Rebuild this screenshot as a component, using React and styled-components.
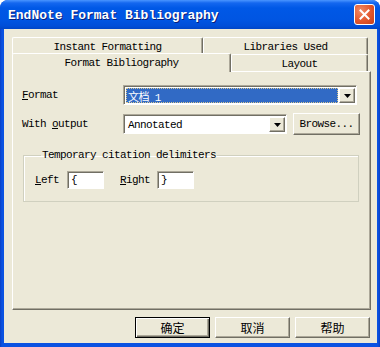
import React from "react";
import styled, { createGlobalStyle } from "styled-components";

const GlobalStyle = createGlobalStyle`
  html, body {
    margin: 0;
    padding: 0;
    background: #fff;
  }
  body {
    font-family: "Liberation Mono", "Noto Sans CJK SC", monospace;
    color: #000;
  }
`;

const Window = styled.div`
  width: 380px;
  height: 347px;
  display: flex;
  flex-direction: column;
  border-radius: 8px 8px 0 0;
  overflow: hidden;
  background: #0848d6;
`;

const TitleBar = styled.div`
  height: 29px;
  flex-shrink: 0;
  display: flex;
  align-items: center;
  justify-content: space-between;
  padding: 0 5px 0 8px;
  background: linear-gradient(
    180deg,
    #4a95ff 0px,
    #1467ef 3px,
    #0058e6 8px,
    #0055e2 20px,
    #004ed8 26px,
    #0045c6 29px
  );
`;

const Title = styled.div`
  color: #fff;
  font: bold 13px "Liberation Mono", monospace;
  text-shadow: 1px 1px #0a1f7a;
  padding-top: 1px;
`;

const CloseButton = styled.div`
  width: 21px;
  height: 21px;
  box-sizing: border-box;
  border: 1px solid #fff;
  border-radius: 3px;
  background: radial-gradient(circle at 30% 30%, #f08a66 0%, #e2572d 55%, #c4401a 100%);
  display: flex;
  align-items: center;
  justify-content: center;
`;

const Frame = styled.div`
  flex: 1;
  display: flex;
  padding: 0 4px 4px 4px;
  background: linear-gradient(90deg, #0a3fc4 0px, #0a52e2 2px, #0a52e2 calc(100% - 2px), #0a3fc4 100%);
`;

const Client = styled.div`
  flex: 1;
  display: flex;
  flex-direction: column;
  background: #ece9d8;
  padding: 8px 6px 5px 8px;
`;

const TabRow = styled.div`
  display: flex;
  height: 17px;
  margin-right: 2px;
  align-items: flex-end;
`;

const Tab = styled.div`
  width: ${(p) => p.$w}px;
  height: ${(p) => (p.$active ? "19px" : "17px")};
  margin-bottom: ${(p) => (p.$active ? "-1px" : "0")};
  position: relative;
  z-index: ${(p) => (p.$active ? 1 : 0)};
  box-sizing: border-box;
  background: #ece9d8;
  border-top: 1px solid #fff;
  border-left: 1px solid #fff;
  border-right: 1px solid #716f64;
  box-shadow: inset -1px 0 #aca899;
  border-radius: 2px 2px 0 0;
  display: flex;
  align-items: center;
  justify-content: center;
  font-size: 11px;
  letter-spacing: -0.6px;
  padding-top: ${(p) => (p.$active ? "0" : "2px")};
`;

const Panel = styled.div`
  flex: 1;
  display: flex;
  flex-direction: column;
  border: 1px solid;
  border-color: #fff #716f64 #716f64 #fff;
  box-shadow: inset -1px -1px #aca899;
  padding: 13px 10px 0 9px;
`;

const FieldRow = styled.div`
  display: flex;
  align-items: center;
  height: ${(p) => p.$h}px;
  margin-top: ${(p) => p.$mt || 0}px;
`;

const Label = styled.div`
  width: 101px;
  font-size: 11px;
  letter-spacing: -0.6px;
`;

const U = styled.span`
  text-decoration: underline;
`;

const Combo = styled.div`
  width: ${(p) => p.$w}px;
  height: 20px;
  box-sizing: border-box;
  background: #fff;
  border: 1px solid;
  border-color: #aca899 #fff #fff #aca899;
  box-shadow: inset 1px 1px #716f64;
  display: flex;
  align-items: center;
  padding: 2px 1px 1px 2px;
  gap: 1px;
`;

const ComboText = styled.div`
  flex: 1;
  height: 100%;
  box-sizing: border-box;
  display: flex;
  align-items: center;
  padding-left: 2px;
  font-size: 11px;
  letter-spacing: -0.6px;
  background: ${(p) => (p.$selected ? "#316ac5" : "transparent")};
  color: ${(p) => (p.$selected ? "#fff" : "#000")};
  outline: ${(p) => (p.$selected ? "1px dotted #d8c890" : "none")};
  outline-offset: -1px;
  font-family: "Liberation Mono", "Noto Sans CJK SC", monospace;
`;

const DropButton = styled.div`
  width: 16px;
  height: 15px;
  box-sizing: border-box;
  background: #ece9d8;
  border: 1px solid;
  border-color: #fff #716f64 #716f64 #fff;
  box-shadow: inset -1px -1px #aca899;
  display: flex;
  align-items: center;
  justify-content: center;
`;

const PushButton = styled.div`
  width: ${(p) => p.$w}px;
  height: ${(p) => p.$h}px;
  box-sizing: border-box;
  margin-left: ${(p) => p.$ml || 0}px;
  background: #ece9d8;
  display: flex;
  align-items: center;
  justify-content: center;
  font-size: ${(p) => (p.$cjk ? "12px" : "11px")};
  letter-spacing: ${(p) => (p.$cjk ? "0" : "-0.6px")};
  font-family: ${(p) =>
    p.$cjk ? '"Noto Sans CJK SC", sans-serif' : '"Liberation Mono", monospace'};
  border: 1px solid;
  border-color: ${(p) => (p.$default ? "#000" : "#fff #716f64 #716f64 #fff")};
  box-shadow: ${(p) =>
    p.$default
      ? "inset 1px 1px #fff, inset -1px -1px #716f64, inset -2px -2px #aca899"
      : "inset -1px -1px #aca899"};
`;

const Group = styled.fieldset`
  margin: 14px 1px 0 1px;
  padding: 9px 11px 12px 11px;
  border: 1px solid #d0d0bf;
  box-shadow: inset 1px 1px #fff;
  display: flex;
  align-items: center;
`;

const Legend = styled.legend`
  padding: 0 1px;
  margin-left: 6px;
  font-size: 11px;
  letter-spacing: -0.6px;
  line-height: 13px;
`;

const GroupLabel = styled.span`
  font-size: 11px;
  letter-spacing: -0.6px;
  margin-right: ${(p) => p.$mr}px;
`;

const TextBox = styled.div`
  width: 37px;
  height: 18px;
  box-sizing: border-box;
  background: #fff;
  border: 1px solid;
  border-color: #aca899 #fff #fff #aca899;
  box-shadow: inset 1px 1px #716f64;
  padding: 2px 0 0 3px;
  font-size: 11px;
  margin-right: ${(p) => p.$mr || 0}px;
`;

const ButtonRow = styled.div`
  display: flex;
  justify-content: flex-end;
  gap: 5px;
  margin-top: 7px;
  margin-right: 1px;
`;

const Arrow = () => (
  <svg width="7" height="4" viewBox="0 0 7 4">
    <path d="M0 0h7L3.5 4z" fill="#000" />
  </svg>
);

export default function App() {
  return (
    <>
      <GlobalStyle />
      <Window>
        <TitleBar>
          <Title>EndNote Format Bibliography</Title>
          <CloseButton>
            <svg width="11" height="11" viewBox="0 0 11 11">
              <path d="M1.5 1.5l8 8M9.5 1.5l-8 8" stroke="#fff" strokeWidth="2" strokeLinecap="square" />
            </svg>
          </CloseButton>
        </TitleBar>
        <Frame>
          <Client>
            <TabRow>
              <Tab $w={191}>Instant Formatting</Tab>
              <Tab $w={165}>Libraries Used</Tab>
            </TabRow>
            <TabRow>
              <Tab $w={219} $active>Format Bibliography</Tab>
              <Tab $w={137}>Layout</Tab>
            </TabRow>
            <Panel>
              <FieldRow $h={20}>
                <Label>
                  <U>F</U>ormat
                </Label>
                <Combo $w={234}>
                  <ComboText $selected>文档 1</ComboText>
                  <DropButton>
                    <Arrow />
                  </DropButton>
                </Combo>
              </FieldRow>
              <FieldRow $h={22} $mt={8}>
                <Label>
                  With <U>o</U>utput
                </Label>
                <Combo $w={164}>
                  <ComboText>Annotated</ComboText>
                  <DropButton>
                    <Arrow />
                  </DropButton>
                </Combo>
                <PushButton $w={67} $h={22} $ml={6}>
                  Browse...
                </PushButton>
              </FieldRow>
              <Group>
                <Legend>Temporary citation delimiters</Legend>
                <GroupLabel $mr={8}>
                  <U>L</U>eft
                </GroupLabel>
                <TextBox $mr={16}>{"{"}</TextBox>
                <GroupLabel $mr={7}>
                  <U>R</U>ight
                </GroupLabel>
                <TextBox>{"}"}</TextBox>
              </Group>
            </Panel>
            <ButtonRow>
              <PushButton $w={75} $h={21} $cjk $default>
                确定
              </PushButton>
              <PushButton $w={75} $h={21} $cjk>
                取消
              </PushButton>
              <PushButton $w={75} $h={21} $cjk>
                帮助
              </PushButton>
            </ButtonRow>
          </Client>
        </Frame>
      </Window>
    </>
  );
}
